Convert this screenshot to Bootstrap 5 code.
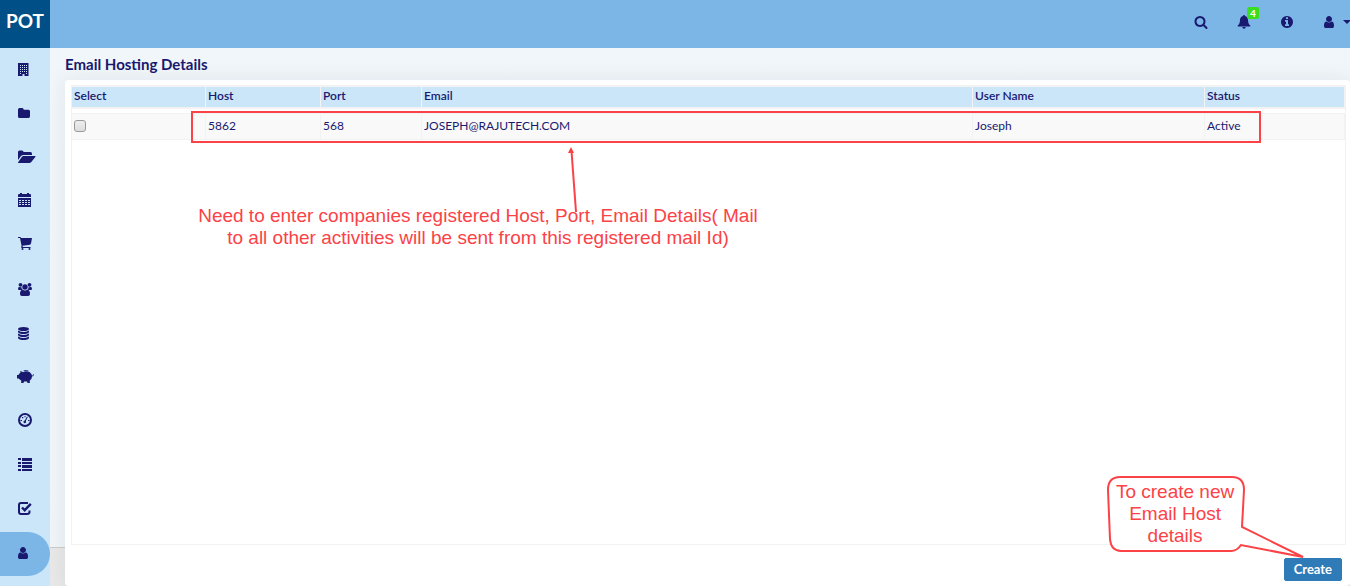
<!DOCTYPE html>
<html lang="en">
<head>
<meta charset="utf-8">
<meta name="viewport" content="width=device-width, initial-scale=1">
<title>Email Hosting Details</title>
<link rel="stylesheet" href="https://cdn.jsdelivr.net/npm/bootstrap@5.3.0/dist/css/bootstrap.min.css">
<style>
:root { --ink: #191970; --sky: #7cb6e7; --pale: #cbe6f9; --note: #fb4246; }
body { font-family: Lato, "Liberation Sans", sans-serif; font-size: 12px; color: var(--ink); }
svg { fill: currentColor; overflow: visible; display: block; }
a { color: var(--ink); text-decoration: none; }
.topbar { height: 48px; background: var(--sky); overflow: hidden; }
.brand { width: 50px; height: 48px; padding-bottom: 5px; background: #004f87; color: #fff; font-size: 19px; font-weight: 700; }
.tools { gap: 29px; padding-bottom: 4px; }
.tools .account { gap: 8px; margin-right: -1px; }
.count { left: 10px; top: -8px; width: 12px; height: 12px; border-radius: 2px; background: #3ade1f; font-size: 10px; padding: 1px 0; line-height: 10px; }
.rail { width: 50px; background: var(--pale); }
.rail a { height: 44px; padding-left: 18px; display: flex; align-items: center; }
.rail a.active { background: var(--sky); border-radius: 0 22px 22px 0; }
.page-area { padding-left: 15px; background: linear-gradient(#f1f6fa, #eff5f8) top / 100% calc(100% - 39px) no-repeat, linear-gradient(#ccc, #ccc) 0 calc(100% - 38px) / 100% 1px no-repeat, #e8e8e8; }
h1 { font-size: 15px; font-weight: 700; line-height: 32px; margin: 0; }
.panel { background: #fff; border-radius: 4px; box-shadow: 0 0 20px rgba(0, 40, 60, .08); padding: 5px 4px 5px 6px; }
.grid-box { border: 1px solid #f2f2f2; }
.hosts { table-layout: fixed; width: 100%; border-collapse: separate; border-spacing: 0; }
.hosts th { height: 23px; padding: 0 2px 2px; background: var(--pale); font-weight: 600; border: solid #f3f3f3; border-width: 1px 1px 2px 0; line-height: 16px; }
.hosts td { height: 27px; padding: 0 2px 2px; background: #f9f9f9; border: solid #f2f2f2; border-width: 1px 1px 1px 0; line-height: 16px; }
.hosts .spacer td { height: 4px; padding: 0; background: #fff; border: 0; }
.hosts input { appearance: none; display: block; width: 12px; height: 12px; margin: 0; border: 1px solid #999; border-radius: 3px; background: linear-gradient(#eee, #ddd); }
.c1 { width: 134px; } .c2 { width: 115px; } .c3 { width: 101px; } .c5 { width: 232px; } .c6 { width: 140px; }
.actions { padding: 13px 4px 0 0; }
.create { --bs-btn-bg: #2f7bb8; --bs-btn-color: #fff; --bs-btn-border-color: #2f7bb8; --bs-btn-hover-bg: #276a9f; --bs-btn-hover-color: #fff; --bs-btn-padding-x: 9px; --bs-btn-padding-y: 0; --bs-btn-font-size: 13px; --bs-btn-border-radius: 2px; height: 23px; line-height: 21px; font-weight: 700; }
.note { position: absolute; color: var(--note); font-family: "Liberation Sans", sans-serif; font-size: 19px; line-height: 22px; text-align: center; pointer-events: none; }
.frame { left: 126px; right: 89px; top: 31px; height: 32px; border: 2px solid var(--note); }
.row-note { left: 133px; top: 125px; width: 560px; }
.pointer { left: 503px; top: 67px; }
.bubble { right: 43px; bottom: 25px; width: 200px; height: 86px; }
.bubble p { width: 136px; margin: 0; padding-top: 6px; }
.bubble svg { position: absolute; left: 0; top: 0; }
</style>
</head>
<body class="min-vh-100 d-flex flex-column">
<header class="topbar d-flex justify-content-between">
  <a href="#" class="brand d-flex align-items-center justify-content-center">POT</a>
  <nav class="tools d-flex align-items-center" aria-label="Account">
    <a href="#" aria-label="Search"><svg width="14" height="14" viewBox="0 0 1792 1792"><path d="M1216 832q0-185-131.500-316.500t-316.500-131.500-316.500 131.500-131.500 316.500 131.500 316.500 316.500 131.500 316.500-131.500 131.500-316.500zm512 832q0 52-38 90t-90 38q-54 0-90-38l-343-342q-179 124-399 124-143 0-273.500-55.500t-225-150-150-225-55.500-273.500 55.500-273.500 150-225 225-150 273.500-55.500 273.500 55.500 225 150 150 225 55.500 273.500q0 220-124 399l343 343q37 37 37 90z"/></svg></a>
    <a href="#" class="position-relative" aria-label="Notifications"><svg width="14" height="14" viewBox="0 0 14 14"><path d="M6 1a1 1 0 0 1 2 0C10 1.500 11 3 11 5c0 3 1 4.500 2.300 5.600V11.500H.7v-.9C2 9.500 3 8 3 5c0-2 1-3.500 3-4zM5.300 12h3.400a1.700 1.700 0 0 1-3.400 0z"/></svg><span class="badge count position-absolute">4</span></a>
    <a href="#" aria-label="Information"><svg width="14" height="14" viewBox="0 0 1792 1792"><path d="M1152 1376v-160q0-14-9-23t-23-9h-96v-512q0-14-9-23t-23-9h-320q-14 0-23 9t-9 23v160q0 14 9 23t23 9h96v320h-96q-14 0-23 9t-9 23v160q0 14 9 23t23 9h448q14 0 23-9t9-23zm-128-896v-160q0-14-9-23t-23-9h-192q-14 0-23 9t-9 23v160q0 14 9 23t23 9h192q14 0 23-9t9-23zm640 416q0 209-103 385.500t-279.500 279.500-385.500 103-385.500-103-279.500-279.500-103-385.500 103-385.500 279.500-279.500 385.500-103 385.500 103 279.500 279.500 103 385.500z"/></svg></a>
    <a href="#" class="account d-flex align-items-center" aria-label="User menu"><svg width="12" height="14" viewBox="128 0 1536 1792"><path d="M1536 1399q0 109-62.500 187t-150.500 78h-854q-88 0-150.500-78t-62.500-187q0-85 8.500-160.500t31.500-152 58.500-131 94-89 134.500-34.500q131 128 313 128t313-128q76 0 134.500 34.500t94 89 58.500 131 31.500 152 8.500 160.500zm-256-887q0 159-112.500 271.500t-271.500 112.500-271.500-112.500-112.500-271.500 112.500-271.500 271.500-112.500 271.500 112.500 112.500 271.500z"/></svg><svg width="8" height="4" viewBox="0 0 8 4"><path d="M0 0h8L4 4z"/></svg></a>
  </nav>
</header>
<div class="d-flex flex-grow-1">
  <nav class="rail flex-shrink-0" aria-label="Main">
    <a href="#" aria-label="Company"><svg width="18" height="14" viewBox="0 0 18 14"><path fill-rule="evenodd" d="M0 0h10.500v13H6.500v-2h-2v2H0zM2 2v1h1V2zm2 0v1h1V2zm2 0v1h1V2zm2 0v1h1V2zM2 4v1h1V4zm2 0v1h1V4zm2 0v1h1V4zm2 0v1h1V4zM2 6v1h1V6zm2 0v1h1V6zm2 0v1h1V6zm2 0v1h1V6zM2 8v1h1V8zm2 0v1h1V8zm2 0v1h1V8zm2 0v1h1V8zM2 10v1h1v-1zm6 0v1h1v-1z"/></svg></a>
    <a href="#" aria-label="Folder"><svg width="18" height="14" viewBox="0 0 18 14"><path d="M0 2.500Q0 1 1.500 1h2.700q1.500 0 1.500 1.700h4.800Q12 2.700 12 4.300v5Q12 11 10.500 11h-9Q0 11 0 9.500z"/></svg></a>
    <a href="#" aria-label="Projects"><svg width="18" height="14" viewBox="0 0 18 14"><path d="M0 1Q0-.5 1.500-.5H4Q5.500-.5 5.500 1h7Q14 1 14 3v1H5.500Q4 4 3 5L0 9zM5.500 5H17q1 0 .3 1l-4 5q-1 1-2 1H.5q-1 0-.2-1l3.500-5q.8-1 1.700-1z"/></svg></a>
    <a href="#" aria-label="Calendar"><svg width="18" height="14" viewBox="0 0 18 14"><path fill-rule="evenodd" d="M0 0q0-1 1-1h1v-1h2v1h5v-1h2v1h1q1 0 1 1v2H0zM0 3h13v9H0zM1 5v1h2V5zm3 0v1h2V5zm3 0v1h2V5zm3 0v1h2V5zM1 7v1h2V7zm3 0v1h2V7zm3 0v1h2V7zm3 0v1h2V7zM1 9v1h2V9zm3 0v1h2V9zm3 0v1h2V9zm3 0v1h2V9z"/></svg></a>
    <a href="#" aria-label="Purchases"><svg width="18" height="14" viewBox="0 0 18 14"><path d="M0-2h2.500l.5 1h11l-1 5.500-1 1.200-7.500 1 .3 1.300H12.500v1H3.500l-.4-1 .5-1L2-1H0z"/><circle cx="4.500" cy="10" r="1"/><circle cx="11.500" cy="10" r="1"/></svg></a>
    <a href="#" aria-label="Teams"><svg width="18" height="14" viewBox="0 0 18 14"><circle cx="2.500" cy="1.800" r="1.900"/><circle cx="11.500" cy="1.800" r="1.900"/><circle cx="7" cy="4" r="2.700"/><path d="M0 6q0-2 1-2l2.500.3Q3.500 6 4.500 7H1Q0 7 0 6zM14 6q0-2-1-2l-2.500.3q0 1.700-1 2.700H13q1 0 1-1zM2 11q0-4 2.500-4.500Q7 8.500 9.500 6.500 12 7 12 11q0 2-2 2H4q-2 0-2-2z"/></svg></a>
    <a href="#" aria-label="Database"><svg width="18" height="14" viewBox="0 0 18 14"><ellipse cx="5.500" cy="2" rx="5.500" ry="2"/><path d="M0 3.500Q5.500 6.500 11 3.500V5Q10 7 5.500 7T0 5zM0 6.500Q5.500 9.500 11 6.500V8Q10 10 5.500 10T0 8zM0 9.500Q5.500 12.500 11 9.500V11Q10 13 5.500 13T0 11z"/></svg></a>
    <a href="#" aria-label="Savings"><svg width="18" height="14" viewBox="0 0 18 14"><path d="M-1 4h1.300Q1.500 2 2.500 1.700L2 .2q2 0 3 1Q8-.8 11.500 1 14 3 14 4.500h.5q.5 0 .5-1.500l.8.5q0 2-1.800 2Q14 8 11.800 9.500V12H9.500l-.5-1.500H6L5.500 12H3.200V9.500Q1.500 8.500.7 7.500H-1z"/><path d="M5.500-.5Q8-1.700 10.500-.3L10.200.2Q8-.8 5.800.3z"/></svg></a>
    <a href="#" aria-label="Dashboard"><svg width="18" height="14" viewBox="0 0 18 14"><circle cx="7" cy="5" r="6" fill="none" stroke="currentColor" stroke-width="2"/><path d="m9 1.500.8.500-2 4a1.300 1.300 0 1 1-1-.5zM2.500 5h1.500v1H2.500zM4 2h1.300v1.300H4zM6.500 1h1v1.300h-1zM10 5h1.500v1H10z"/></svg></a>
    <a href="#" aria-label="Lists"><svg width="18" height="14" viewBox="0 0 18 14"><path d="M0-1h3v2H0zm4 0h10v3H4zM0 3h3v2H0zm4 0h10v2H4zM0 6h3v2H0zm4 0h10v3H4zM0 10h3v2H0zm4 0h10v2H4z"/></svg></a>
    <a href="#" aria-label="Approvals"><svg width="18" height="14" viewBox="0 0 18 14"><path d="M10 0H3Q1 0 1 2v7q0 2 2 2h6q2.500 0 2.500-2V7.500" fill="none" stroke="currentColor" stroke-width="2"/><path d="m4 4.500 2.700 2.700L12.800.8" fill="none" stroke="currentColor" stroke-width="2.400"/></svg></a>
    <a href="#" class="active" aria-label="Users" aria-current="page"><svg width="10" height="14" viewBox="256 128 1280 1792"><path d="M1536 1399q0 109-62.500 187t-150.500 78h-854q-88 0-150.500-78t-62.500-187q0-85 8.500-160.500t31.500-152 58.500-131 94-89 134.500-34.500q131 128 313 128t313-128q76 0 134.500 34.500t94 89 58.500 131 31.500 152 8.500 160.500zm-256-887q0 159-112.500 271.500t-271.500 112.500-271.500-112.500-112.500-271.500 112.500-271.500 271.500-112.500 271.500 112.500 112.500 271.500z"/></svg></a>
  </nav>
  <main class="page-area flex-grow-1 d-flex flex-column overflow-hidden">
    <h1>Email Hosting Details</h1>
    <section class="panel position-relative flex-grow-1 d-flex flex-column">
      <div class="grid-box flex-grow-1">
        <table class="hosts">
          <colgroup><col class="c1"><col class="c2"><col class="c3"><col><col class="c5"><col class="c6"></colgroup>
          <thead><tr><th>Select</th><th>Host</th><th>Port</th><th>Email</th><th>User Name</th><th>Status</th></tr></thead>
          <tbody>
            <tr class="spacer" aria-hidden="true"><td colspan="6"></td></tr>
            <tr><td><input type="checkbox" aria-label="Select Joseph"></td><td>5862</td><td>568</td><td>JOSEPH@RAJUTECH.COM</td><td>Joseph</td><td>Active</td></tr>
          </tbody>
        </table>
      </div>
      <div class="actions d-flex justify-content-end"><button type="button" class="btn create">Create</button></div>
      <div class="note frame"></div>
      <svg class="note pointer" width="10" height="66" viewBox="0 0 10 66"><path d="M3.500 4 8 65" stroke="currentColor" stroke-width="2"/><path d="M3 0 0 6h6z"/></svg>
      <div class="note row-note">Need to enter companies registered Host, Port, Email Details( Mail<br>to all other activities will be sent from this registered mail Id)</div>
      <div class="note bubble">
        <svg width="200" height="86" viewBox="0 0 200 86"><path d="M13 2H125Q137 2 137 15L135 52 196 82 134 70Q130 76 124 76H14Q4 76 3 64L1 15Q1 2 13 2z" fill="#fff" stroke="currentColor" stroke-width="2"/></svg>
        <p class="position-relative">To create new<br>Email Host<br>details</p>
      </div>
    </section>
  </main>
</div>
<script src="https://cdn.jsdelivr.net/npm/bootstrap@5.3.0/dist/js/bootstrap.bundle.min.js"></script>
</body>
</html>
